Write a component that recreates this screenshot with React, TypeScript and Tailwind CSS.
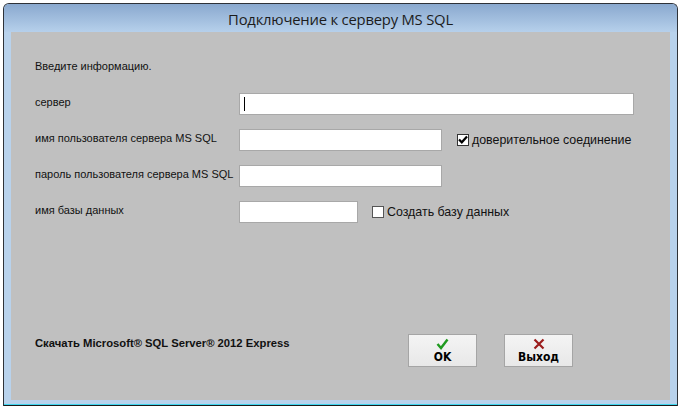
import React from 'react';

const rows = [
  { label: 'сервер', width: 'w-[395px]', cursor: true },
  { label: 'имя пользователя сервера MS SQL', width: 'w-[203px]', check: { on: true, text: 'доверительное соединение', gap: 'ml-[15px]' } },
  { label: 'пароль пользователя сервера MS SQL', width: 'w-[203px]' },
  { label: 'имя базы данных', width: 'w-[119px]', check: { on: false, text: 'Создать базу данных', gap: 'ml-[14px]' } },
];

function Box({ on }: { on: boolean }) {
  return (
    <span
      className={`flex h-[12px] w-[12px] items-center justify-center bg-white border ${
        on ? 'border-[#333]' : 'border-[#555]'
      }`}
    >
      {on && (
        <svg width="10" height="9" viewBox="0 0 10 9">
          <path d="M1 4.5 L3.8 7.3 L9 1.5" fill="none" stroke="#000" strokeWidth="2.2" />
        </svg>
      )}
    </span>
  );
}

function DlgButton({ kind, text }: { kind: 'ok' | 'exit'; text: string }) {
  return (
    <button className="flex h-[33px] w-[69px] flex-col items-center justify-center border border-[#a5a5a5] bg-gradient-to-b from-[#f4f4f4] to-[#e8e8e8] pt-[1px]">
      {kind === 'ok' ? (
        <svg width="13" height="12" viewBox="0 0 13 12">
          <path d="M1.5 6 L5 10 L11.5 1.5" fill="none" stroke="#1f9a1f" strokeWidth="2.4" />
        </svg>
      ) : (
        <svg width="12" height="12" viewBox="0 0 12 12">
          <path d="M1.5 1.5 L10.5 10.5 M10.5 1.5 L1.5 10.5" fill="none" stroke="#9b1c1c" strokeWidth="2.2" />
        </svg>
      )}
      <span className="mt-[1px] text-[12px] font-bold leading-[13px] text-black [font-family:'DejaVu_Sans_Condensed','Liberation_Sans',sans-serif]">
        {text}
      </span>
    </button>
  );
}

export default function App() {
  return (
    <div className="h-[410px] w-[681px] bg-white pl-[3px] pt-[3px] [font-family:'Liberation_Sans',Arial,sans-serif]">
      <div className="flex h-[403px] w-[675px] flex-col rounded-t-[6px] border border-b-0 border-[#2e3238] bg-[#b8d2ec]">
        <div className="flex h-[28px] shrink-0 items-center justify-center rounded-t-[5px] bg-gradient-to-b from-[#8aa9cf] to-[#b6d0eb] pt-[3px]">
          <span className="text-[14.8px] text-[#1c1c1c] [font-family:'Open_Sans','Noto_Sans',sans-serif] tracking-[-0.2px]">
            Подключение к серверу MS SQL
          </span>
        </div>
        <div className="mx-[7px] flex h-[368px] flex-col bg-[#c0c0c0] pl-[24px] text-[11px] text-[#111]">
          <div className="mt-[27px] h-[14px] leading-[14px]">Введите информацию.</div>
          <div className="mt-[20px] flex flex-col gap-[14px]">
            {rows.map((r) => (
              <div key={r.label} className="flex h-[22px] items-center">
                <span className="w-[204px] -mt-[4px]">{r.label}</span>
                <div className={`relative h-[22px] ${r.width} border border-[#a8a8a8] bg-white`}>
                  {r.cursor && <span className="absolute left-[4px] top-[3px] h-[14px] w-[1px] bg-black" />}
                </div>
                {r.check && (
                  <div className={`flex items-center ${r.check.gap}`}>
                    <Box on={r.check.on} />
                    <span className="ml-[3px] text-[12.4px] text-[#111]">{r.check.text}</span>
                  </div>
                )}
              </div>
            ))}
          </div>
          <div className="mt-auto mb-[33px] flex items-start">
            <span className="mt-[1px] w-[373px] text-[11.25px] font-bold text-[#111]">
              Скачать Microsoft® SQL Server® 2012 Express
            </span>
            <DlgButton kind="ok" text="OK" />
            <div className="w-[27px]" />
            <DlgButton kind="exit" text="Выход" />
          </div>
        </div>
        <div className="h-[4px] bg-[#b8d2ec]" />
        <div className="h-[1px] bg-[#3fd6ee]" />
        <div className="h-[1px] bg-[#1a1a1a]" />
      </div>
    </div>
  );
}
